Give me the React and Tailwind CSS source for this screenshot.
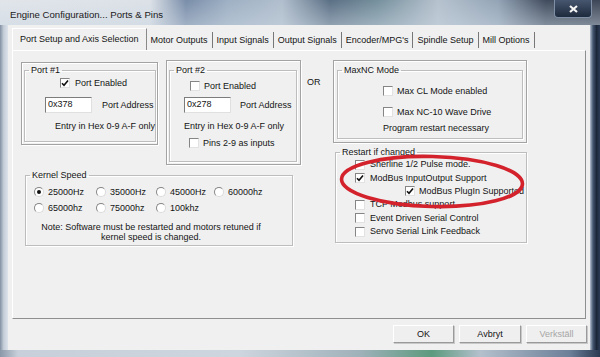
// Engine Configuration dialog (Ports & Pins)
const otherTabs = ["Motor Outputs", "Input Signals", "Output Signals", "Encoder/MPG's", "Spindle Setup", "Mill Options"];

function Check({ on }) {
  return (
    <span className="w-[10px] h-[10px] shrink-0 bg-white border border-[#858585] border-r-[#e2e2e2] border-b-[#e2e2e2] flex items-center justify-center">
      {on && (
        <svg width="8" height="8" viewBox="0 0 8 8">
          <path d="M1 4.2 L3 6.3 L7 1.4" stroke="#111" strokeWidth="1.6" fill="none" />
        </svg>
      )}
    </span>
  );
}

function Radio({ on }) {
  return (
    <span className="w-[10px] h-[10px] shrink-0 rounded-full bg-white border border-[#858585] border-r-[#dadada] border-b-[#dadada] flex items-center justify-center">
      {on && <span className="w-[4px] h-[4px] rounded-full bg-[#111]" />}
    </span>
  );
}

function CheckRow({ on, label, className }) {
  return (
    <div className={"flex items-center gap-[4px] " + className}>
      <Check on={on} />
      <span>{label}</span>
    </div>
  );
}

function RadioItem({ on, label, className }) {
  return (
    <div className={"flex items-center gap-[4px] " + className}>
      <Radio on={on} />
      <span>{label}</span>
    </div>
  );
}

function Group({ title, className, children }) {
  return (
    <fieldset className={"border border-[#bdbdbd] shadow-[inset_1px_1px_0_#fff,1px_1px_0_#fff] " + className}>
      <legend className="ml-[4px] px-[2px] leading-[11px]">{title}</legend>
      {children}
    </fieldset>
  );
}

function Field({ value }) {
  return (
    <div className="w-[47px] h-[16px] shrink-0 bg-white border border-[#7c7c7c] border-r-[#e0e0e0] border-b-[#e0e0e0] pl-[2px] pt-[1px]">
      {value}
    </div>
  );
}

function Button({ label, disabled }) {
  return (
    <div
      className={
        "h-[18px] flex items-center justify-center bg-[#efefef] border border-white border-r-[#9a9a9a] border-b-[#9a9a9a] shadow-[1px_1px_0_#c8c8c8] " +
        (disabled ? "text-[#a6a6a6]" : "text-[#141414]")
      }
      style={{ width: label === "Avbryt" ? 62 : 61 }}
    >
      {label}
    </div>
  );
}

export default function App() {
  return (
    <div className="w-[600px] h-[357px] relative overflow-hidden flex flex-col whitespace-nowrap font-['Liberation_Sans',Arial,sans-serif] text-[9px] leading-[11px] text-[#141414]">
      {/* Aero title bar */}
      <div className="h-[25px] shrink-0 flex bg-[linear-gradient(180deg,rgba(255,255,255,0.15),rgba(210,220,230,0.55)),linear-gradient(90deg,#dce1e7_0%,#d6dce3_25%,#62799a_31%,#8da2b9_38%,#a3b3c4_47%,#3e566f_55%,#5e7d8c_63%,#a9b7c5_73%,#8094a9_83%,#1f2c41_91%,#1a2538_100%)]">
        <span className="pl-[10px] pt-[9px] text-[9.6px] leading-[11px] text-[#1b1b1b]">Engine Configuration... Ports &amp; Pins</span>
        <div className="ml-auto mr-[8px] w-[38px] h-[18px] rounded-b-[4px] border border-t-0 border-[#7f90a6] bg-[linear-gradient(180deg,#46566e,#1e2a3d)] flex items-center justify-center">
          <svg width="9" height="8" viewBox="0 0 9 8">
            <path d="M1 1 L8 7 M8 1 L1 7" stroke="#f4f4f4" strokeWidth="2.2" />
          </svg>
        </div>
      </div>

      <div className="h-[325px] shrink-0 flex">
        <div className="w-[8px] bg-[linear-gradient(90deg,#8190a2,#c3ccd7_45%,#dde3ea)]" />

        {/* client area */}
        <div className="w-[582px] bg-[#f0f0f0] flex flex-col pt-[3px] px-[4px]">
          {/* tabs */}
          <div className="h-[22px] flex items-end">
            <div className="h-[22px] px-[7px] flex items-center border border-b-0 border-white border-r-[#8a8a8a]">
              Port Setup and Axis Selection
            </div>
            {otherTabs.map((t) => (
              <div key={t} className="h-[16px] mb-[2px] px-[4px] flex items-center border-r border-[#777]">
                {t}
              </div>
            ))}
          </div>

          {/* tab page */}
          <div className="h-[269px] flex pl-[8px] pt-[9px] border border-white border-r-[#8f8f8f] border-b-[#8f8f8f]">
            {/* left column */}
            <div className="w-[280px] shrink-0 flex flex-col">
              <div className="flex items-start">
                <div className="mt-[2px] w-[137px] h-[83px] shrink-0 border border-[#a3a3a3] shadow-[inset_1px_1px_0_#fff,1px_1px_0_#fff] pt-[2px] pl-[2px]">
                  <Group title="Port #1" className="w-[130px] h-[77px]">
                    <CheckRow on label="Port Enabled" className="mt-[2px] h-[10px] pl-[35px] gap-[5px]" />
                    <div className="mt-[9px] pl-[20px] flex items-center">
                      <Field value="0x378" />
                      <span className="ml-[10px]">Port Address</span>
                    </div>
                    <div className="mt-[8px] pl-[30px]">Entry in Hex 0-9 A-F only</div>
                  </Group>
                </div>

                <div className="ml-[8px] w-[135px] h-[105px] shrink-0 border border-[#a3a3a3] shadow-[inset_1px_1px_0_#fff,1px_1px_0_#fff] pt-[4px] pl-[2px]">
                  <Group title="Port #2" className="w-[128px] h-[97px]">
                    <CheckRow label="Port Enabled" className="mt-[5px] h-[10px] pl-[20px]" />
                    <div className="mt-[6px] pl-[14px] flex items-center">
                      <Field value="0x278" />
                      <span className="ml-[9px]">Port Address</span>
                    </div>
                    <div className="mt-[8px] pl-[14px]">Entry in Hex 0-9 A-F only</div>
                    <CheckRow label="Pins 2-9 as inputs" className="mt-[6px] h-[10px] pl-[19px] gap-[3px]" />
                  </Group>
                </div>
              </div>

              <Group title="Kernel Speed" className="ml-[4px] mt-[5px] w-[268px] h-[76px]">
                <div className="mt-[6px] h-[10px] pl-[8px] flex">
                  <RadioItem on label="25000Hz" className="w-[62px]" />
                  <RadioItem label="35000Hz" className="w-[60px]" />
                  <RadioItem label="45000Hz" className="w-[58px]" />
                  <RadioItem label="60000hz" />
                </div>
                <div className="mt-[6px] h-[10px] pl-[8px] flex">
                  <RadioItem label="65000hz" className="w-[62px]" />
                  <RadioItem label="75000hz" className="w-[60px]" />
                  <RadioItem label="100khz" className="w-[58px]" />
                </div>
                <div className="mt-[9px] pr-[16px] text-center leading-[10px]">
                  Note: Software must be restarted and motors retuned if
                  <br />
                  kernel speed is changed.
                </div>
              </Group>
            </div>

            <div className="w-[32px] shrink-0 pl-[6px] pt-[17px]">OR</div>

            {/* right column */}
            <div className="w-[194px] shrink-0 flex flex-col">
              <div className="w-[194px] h-[83px] border border-[#a3a3a3] shadow-[inset_1px_1px_0_#fff,1px_1px_0_#fff] pt-[4px] pl-[3px]">
                <Group title="MaxNC Mode" className="w-[186px] h-[74px]">
                  <CheckRow label="Max CL Mode enabled" className="mt-[10px] h-[10px] pl-[45px]" />
                  <CheckRow label="Max NC-10 Wave Drive" className="mt-[11px] h-[10px] pl-[45px]" />
                  <div className="mt-[6px] pl-[45px]">Program restart necessary</div>
                </Group>
              </div>

              <Group title="Restart if changed" className="ml-[2px] mt-[4px] w-[192px] h-[96px]">
                <CheckRow label="Sherline 1/2 Pulse mode." className="h-[13.4px] pl-[19px] gap-[5px]" />
                <CheckRow on label="ModBus InputOutput Support" className="h-[13.4px] pl-[19px] gap-[5px]" />
                <CheckRow on label="ModBus PlugIn Supported" className="h-[13.4px] pl-[69px]" />
                <CheckRow label="TCP Modbus support" className="h-[13.4px] pl-[19px] gap-[5px]" />
                <CheckRow label="Event Driven Serial Control" className="h-[13.4px] pl-[19px] gap-[5px]" />
                <CheckRow label="Servo Serial Link Feedback" className="h-[13.4px] pl-[19px] gap-[5px]" />
              </Group>
            </div>
          </div>

          {/* dialog buttons */}
          <div className="mt-[6px] flex justify-end gap-[5px] -mr-[1px]">
            <Button label="OK" />
            <Button label="Avbryt" />
            <Button label="Verkställ" disabled />
          </div>
        </div>

        <div className="flex-1 bg-[linear-gradient(90deg,#b7c2cf,#43556f_30%,#1c2639_65%,#2c3c55)]" />
      </div>

      <div className="flex-1 bg-[linear-gradient(90deg,#8a97a8,#c7d0da_3%,#cdd5de_40%,#9fb1b9_60%,#5c9a7e_72%,#b4c0cc_80%,#6b7f98_95%,#2a3a52)]" />

      {/* red annotation drawn over the dialog */}
      <svg className="absolute inset-0 pointer-events-none" width="600" height="357" viewBox="0 0 600 357">
        <ellipse cx="432" cy="181.5" rx="90.5" ry="25" fill="none" stroke="#d3222b" strokeWidth="3.6" transform="rotate(1.5 432 181.5)" />
      </svg>
    </div>
  );
}
